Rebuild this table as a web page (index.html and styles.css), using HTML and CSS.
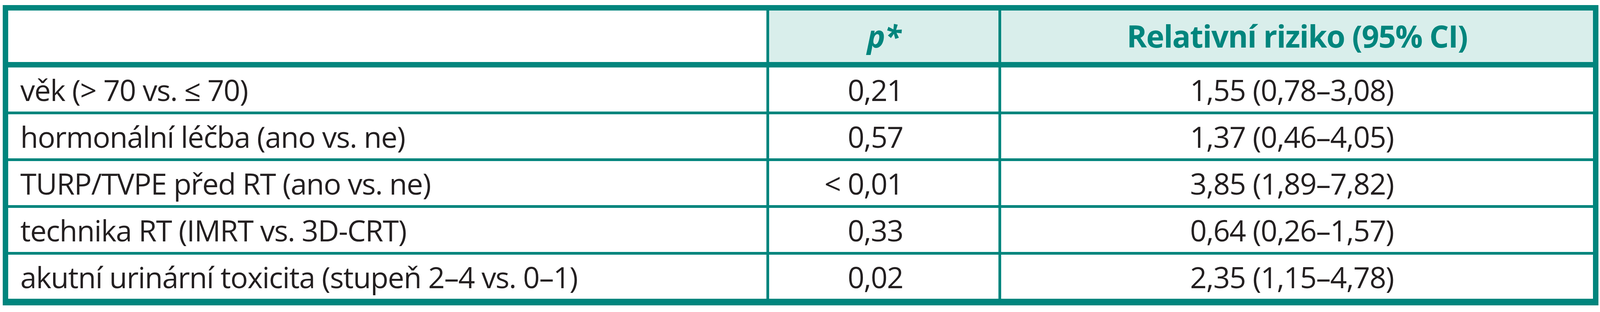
FILE: index.html
```html
<!DOCTYPE html>
<html lang="cs">
<head>
<meta charset="utf-8">
<title>Tabulka</title>
<link rel="stylesheet" href="styles.css">
</head>
<body>
<table class="risk">
  <colgroup>
    <col class="c1">
    <col class="c2">
    <col class="c3">
  </colgroup>
  <thead>
    <tr>
      <th class="blank"></th>
      <th class="hp"><span class="pit">p*</span></th>
      <th class="hr">Relativní riziko (95% CI)</th>
    </tr>
  </thead>
  <tbody>
    <tr>
      <td class="lab">věk (&gt; 70 vs. ≤ 70)</td>
      <td class="pv">0,21</td>
      <td class="rr">1,55 (0,78–3,08)</td>
    </tr>
    <tr>
      <td class="lab">hormonální léčba (ano vs. ne)</td>
      <td class="pv">0,57</td>
      <td class="rr">1,37 (0,46–4,05)</td>
    </tr>
    <tr>
      <td class="lab">TURP/TVPE před RT (ano vs. ne)</td>
      <td class="pv">&lt; 0,01</td>
      <td class="rr">3,85 (1,89–7,82)</td>
    </tr>
    <tr>
      <td class="lab">technika RT (IMRT vs. 3D-CRT)</td>
      <td class="pv">0,33</td>
      <td class="rr">0,64 (0,26–1,57)</td>
    </tr>
    <tr>
      <td class="lab">akutní urinární toxicita (stupeň 2–4 vs. 0–1)</td>
      <td class="pv">0,02</td>
      <td class="rr">2,35 (1,15–4,78)</td>
    </tr>
  </tbody>
</table>
</body>
</html>
```
FILE: styles.css
```css
html, body {
  margin: 0;
  padding: 0;
  background: #ffffff;
}

body {
  padding: 13px 0 0 7px;
  font-family: "Open Sans", "Noto Sans", sans-serif;
}

.risk {
  table-layout: fixed;
  border-collapse: separate;
  border-spacing: 0;
  width: 4085px;
  border-style: solid;
  border-color: #00857d;
  border-width: 14px 14px 17px 14px;
}

.c1 { width: 1941px; }
.c2 { width: 594px; }
.c3 { width: 1522px; }

.risk th,
.risk td {
  padding: 0;
  vertical-align: middle;
  box-sizing: content-box;
}

.risk th {
  height: 132px;
  border-bottom: 14px solid #00857d;
  background: #d9eeeb;
  color: #00857d;
  font-weight: 700;
  font-size: 78px;
  line-height: 1.2;
  text-align: center;
  letter-spacing: -1.6px;
}

.risk th.blank {
  background: #ffffff;
}

.risk th + th,
.risk td + td {
  border-left: 7px solid #00857d;
}

.pit {
  font-style: italic;
}

.risk td {
  height: 113px;
  color: #231f20;
  font-size: 75px;
  line-height: 1.2;
  letter-spacing: -1.5px;
  white-space: nowrap;
}

.risk tbody tr + tr td {
  border-top: 7px solid #00857d;
}

.lab {
  text-align: left;
  padding-left: 31px !important;
}

.pv {
  text-align: right;
  padding-right: 244px !important;
}

.rr {
  text-align: right;
  padding-right: 510px !important;
}
```
